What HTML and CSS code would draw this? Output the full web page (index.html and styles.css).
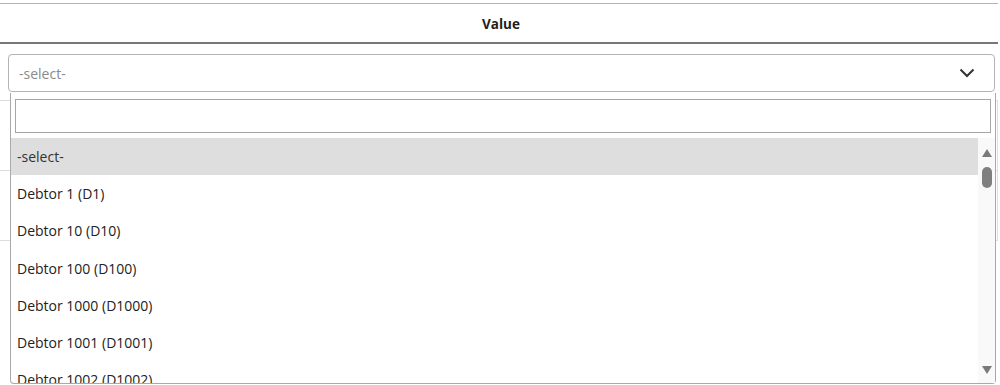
FILE: index.html
```html
<!DOCTYPE html>
<html>
<head>
<meta charset="utf-8">
<link rel="stylesheet" href="styles.css">
</head>
<body>
<div class="grid">
  <div class="head">Value</div>
  <div class="row row-first">
    <div class="select-wrap">
      <div class="select">
        <span class="placeholder">-select-</span>
        <svg class="chevron" width="16" height="10" viewBox="0 0 16 10"><path d="M1.5 1.5 L8 8 L14.5 1.5" fill="none" stroke="#333" stroke-width="2"/></svg>
      </div>
      <div class="dropdown">
        <div class="search"></div>
        <div class="list-area">
          <ul class="options">
            <li class="opt active">-select-</li>
            <li class="opt">Debtor 1 (D1)</li>
            <li class="opt">Debtor 10 (D10)</li>
            <li class="opt">Debtor 100 (D100)</li>
            <li class="opt">Debtor 1000 (D1000)</li>
            <li class="opt">Debtor 1001 (D1001)</li>
            <li class="opt">Debtor 1002 (D1002)</li>
            <li class="opt">Debtor 1003 (D1003)</li>
          </ul>
          <div class="scrollbar">
            <span class="arrow-up"></span>
            <span class="thumb"></span>
            <span class="spacer"></span>
            <span class="arrow-down"></span>
          </div>
        </div>
      </div>
    </div>
  </div>
  <div class="row row-second"></div>
  <div class="row row-third"></div>
</div>
</body>
</html>
```

FILE: styles.css
```css
* { box-sizing: border-box; }
html, body { margin: 0; padding: 0; background: #fff; }
body {
  font-family: "Open Sans", "Noto Sans", Arial, sans-serif;
  font-size: 14px;
  color: #222;
  width: 1000px;
  height: 385px;
  overflow: hidden;
}
.grid {
  padding-top: 3px;
  width: 998px;
}
.head {
  border-top: 1px solid #b4b4b4;
  border-bottom: 2px solid #777;
  height: 41px;
  display: flex;
  align-items: center;
  justify-content: center;
  font-weight: 700;
  font-size: 13.5px;
  color: #1e1e1e;
  padding-left: 4px;
  padding-top: 1px;
}
.row {
  border-bottom: 1px solid #dcdcdc;
}
.row-first { height: 57px; padding: 10px 3px 0 8px; }
.row-second { height: 70px; border-right: 1px solid #e2e2e2; }
.row-third { height: 70px; border-right: 1px solid #e2e2e2; }
.select-wrap { position: relative; }
.select {
  height: 38px;
  border: 1px solid #b3b3b3;
  border-radius: 4px;
  display: flex;
  align-items: center;
  justify-content: space-between;
  padding: 0 19px 0 10px;
}
.placeholder { color: #8a8a8a; font-size: 14px; }
.chevron { display: block; }
.dropdown {
  position: absolute;
  left: 2px;
  right: -1px;
  top: 39px;
  height: 291px;
  background: #fff;
  border: 1px solid #a9a9a9;
  border-top: none;
  border-radius: 0 0 4px 4px;
  display: flex;
  flex-direction: column;
  padding: 6px 0 0 0;
  z-index: 2;
}
.search {
  height: 34px;
  margin: 0 4px 0 4px;
  border: 1px solid #a6a6a6;
  background: #fff;
  flex: none;
}
.list-area {
  margin-top: 5px;
  flex: 1;
  display: flex;
  overflow: hidden;
  min-height: 0;
}
.options {
  list-style: none;
  margin: 0;
  padding: 0;
  flex: 1;
  overflow: hidden;
}
.opt {
  height: 37.2px;
  display: flex;
  align-items: center;
  padding-left: 6px;
  color: #222;
  white-space: nowrap;
}
.opt.active { background: #dedede; color: #333; }
.scrollbar {
  width: 17px;
  flex: none;
  background: #f9f9f9;
  display: flex;
  flex-direction: column;
  align-items: center;
  padding: 11px 0 9px;
}
.arrow-up, .arrow-down {
  width: 0; height: 0;
  border-left: 5.5px solid transparent;
  border-right: 5.5px solid transparent;
}
.arrow-up { border-bottom: 8px solid #7a7a7a; }
.arrow-down { border-top: 8px solid #7a7a7a; }
.thumb {
  margin-top: 10px;
  width: 10px;
  height: 21px;
  border-radius: 5px;
  background: #7f7f7f;
}
.spacer { flex: 1; }
```
